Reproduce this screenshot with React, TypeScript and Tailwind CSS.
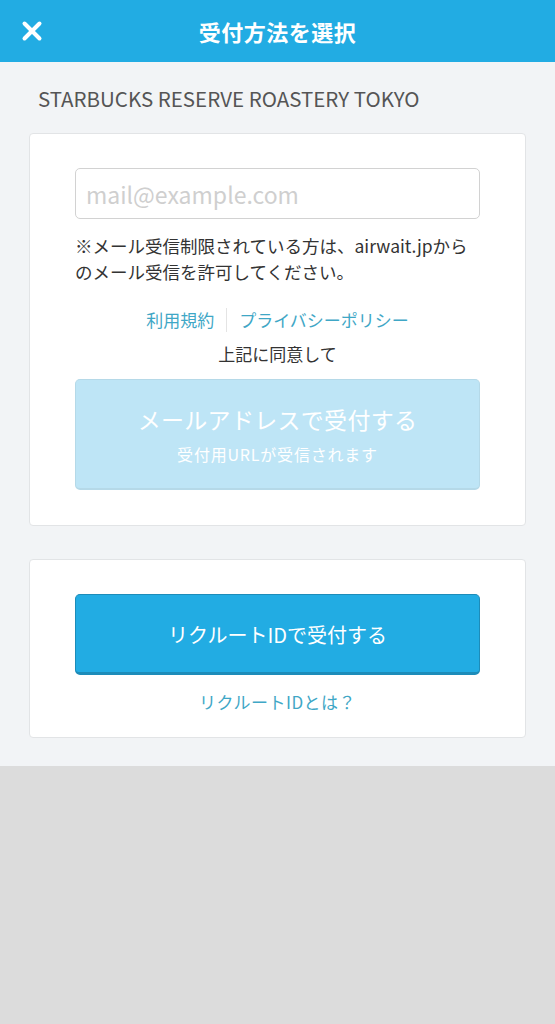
import { X } from "lucide-react"

const FONT = { fontFamily: '"Noto Sans CJK JP", "Noto Sans", sans-serif' }

export default function App() {
  return (
    <div className="min-h-screen bg-[#dcdcdc] flex flex-col" style={FONT}>
      {/* ヘッダー */}
      <header className="h-[62px] bg-[#22ace3] flex items-center relative shrink-0">
        <button className="absolute left-[17px] top-[16px] text-white">
          <X size={30} strokeWidth={3.2} />
        </button>
        <h1 className="w-full text-center text-white text-[22px] font-bold tracking-[0.5px]">受付方法を選択</h1>
      </header>

      <main className="bg-[#f2f4f6] px-[29px] pb-[28px]">
        <p className="text-[#555] text-[20.5px] leading-[26px] pl-[9px] pt-[23px] pb-[22px]">
          STARBUCKS RESERVE ROASTERY TOKYO
        </p>

        {/* メール受付 */}
        <section className="bg-white border border-[#e2e4e6] rounded-[4px] px-[45px] pt-[34px] pb-[35px]">
          <input
            className="w-full h-[51px] border border-[#d2d2d2] rounded-[5px] px-[10px] text-[23px] placeholder:text-[#cfcfcf] outline-none"
            placeholder="mail@example.com"
          />
          <p className="text-[#333] text-[17.5px] leading-[26px] mt-[14px]">
            ※メール受信制限されている方は、airwait.jpからのメール受信を許可してください。
          </p>
          <div className="flex justify-center items-center mt-[23px] text-[17px] leading-[24px] text-[#3fa7c6]">
            <a className="pr-[12px]">利用規約</a>
            <span className="w-px h-[24px] bg-[#e4e4e4]" />
            <a className="pl-[12px]">プライバシーポリシー</a>
          </div>
          <p className="text-center text-[#333] text-[17px] leading-[24px] mt-[10px]">上記に同意して</p>
          <button
            disabled
            className="w-full h-[111px] mt-[13px] bg-[#bee5f6] border border-[#b5d9e8] border-b-[2px] rounded-[5px] text-white flex flex-col items-center justify-center"
          >
            <span className="text-[23px] leading-[30px] tracking-[0.3px]">メールアドレスで受付する</span>
            <span className="text-[16px] leading-[22px] mt-[9px] tracking-[0.8px]">受付用URLが受信されます</span>
          </button>
        </section>

        {/* リクルートID */}
        <section className="mt-[33px] bg-white border border-[#e2e4e6] rounded-[4px] px-[45px] pt-[34px] pb-[23px]">
          <button className="w-full h-[81px] bg-[#22ace3] border border-[#1d8cb9] border-b-[3px] rounded-[5px] text-white text-[20px] pt-[2px]">
            リクルートIDで受付する
          </button>
          <p className="text-center text-[#3fa7c6] text-[17px] leading-[24px] mt-[15px] tracking-[0.5px]">
            <a>リクルートIDとは？</a>
          </p>
        </section>
      </main>
    </div>
  )
}
